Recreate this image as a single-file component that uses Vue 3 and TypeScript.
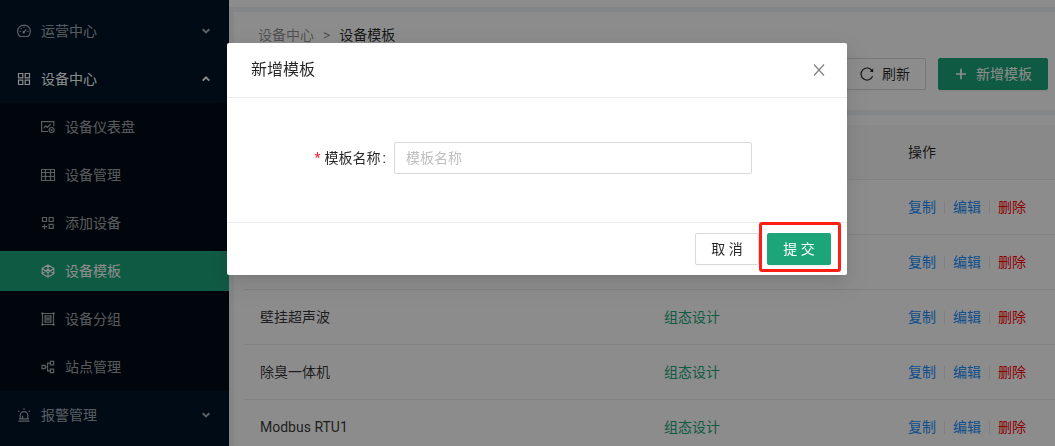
<script setup lang="ts">
import { ref } from 'vue'

interface SubItem {
  label: string
  icon: string
}

interface TemplateRow {
  id: number
  name: string
}

const subItems: SubItem[] = [
  { label: '设备仪表盘', icon: 'fund' },
  { label: '设备管理', icon: 'table' },
  { label: '添加设备', icon: 'add' },
  { label: '设备模板', icon: 'template' },
  { label: '设备分组', icon: 'group' },
  { label: '站点管理', icon: 'site' },
]

const rows: TemplateRow[] = [
  { id: 1, name: '' },
  { id: 2, name: '' },
  { id: 3, name: '壁挂超声波' },
  { id: 4, name: '除臭一体机' },
  { id: 5, name: 'Modbus RTU1' },
]

const active = ref('设备模板')
const templateName = ref('')
</script>

<template>
  <div class="shell">
    <nav class="sider">
      <button type="button" class="menu-item">
        <svg class="icon" viewBox="0 0 14 14">
          <path d="M3.1 12.5a6.4 6.4 0 1 1 7.8 0z" />
          <path d="M6.6 8.4l2.8-3M7 2.6v1.2M2.6 7.4h1.2M10.2 7.4h1.2M3.9 4.2l.8.8" />
          <circle cx="6.7" cy="8.2" r=".6" />
        </svg>
        <span>运营中心</span>
        <svg class="arrow" viewBox="0 0 8 6"><path d="M.7 1.2L4 4.4l3.3-3.2" /></svg>
      </button>
      <button type="button" class="menu-item open">
        <svg class="icon" viewBox="0 0 14 14">
          <path d="M1.5 1.5h4.3v4.3H1.5zM8.2 1.5h4.3v4.3H8.2zM1.5 8.2h4.3v4.3H1.5zM8.2 8.2h4.3v4.3H8.2z" />
        </svg>
        <span>设备中心</span>
        <svg class="arrow" viewBox="0 0 8 6"><path d="M.7 4.6L4 1.4l3.3 3.2" /></svg>
      </button>
      <div class="submenu">
        <a
          v-for="item in subItems"
          :key="item.label"
          href="#"
          class="sub-item"
          :class="{ selected: item.label === active }"
          @click.prevent="active = item.label"
        >
          <svg class="icon" viewBox="0 0 14 14">
            <template v-if="item.icon === 'fund'">
              <path d="M7 11.5H.6V1.6h12.2v4.6M2.6 8.3l2.2-2.4 1.6 1.5 3.4-3.6" />
              <circle cx="10.6" cy="10" r="2.5" />
              <circle cx="10.6" cy="10" r=".5" />
            </template>
            <path
              v-else-if="item.icon === 'table'"
              d="M.5 1.5h13v11H.5zM.5 4.5h13M.5 8.5h13M4.5 1.5v11M9.5 1.5v11"
            />
            <path
              v-else-if="item.icon === 'add'"
              d="M1.5 1.5h4v4h-4zM8.2 1.5h4v4h-4zM8.2 8.3h4v4h-4zM3.5 8.3v4.9M1 10.7h5"
            />
            <path
              v-else-if="item.icon === 'template'"
              d="M7 .9l5.8 3.4v5.4L7 13.1 1.2 9.7V4.3zM1.2 4.6L7 8.8l5.8-4.2M1.2 9.4L7 5.2l5.8 4.2M7 .9v4.3M7 8.8v4.3"
            />
            <template v-else-if="item.icon === 'group'">
              <path d="M1.5 1.5h11v11h-11zM4 3.8h6v2.4H4zM4 7.8h6v2.4H4z" />
              <path d="M.3 1.2h2M11.7 1.2h2M.3 12.8h2M11.7 12.8h2" />
            </template>
            <path
              v-else
              d="M1 5.4h3.2v3.2H1zM9.4 1.4h3.2v3.4H9.4zM9.4 9.2h3.2v3.4H9.4zM4.2 7h2.4M9.4 3.1H6.6v7.8h2.8"
            />
          </svg>
          <span>{{ item.label }}</span>
        </a>
      </div>
      <button type="button" class="menu-item">
        <svg class="icon" viewBox="0 0 14 14">
          <path d="M3.2 10.9V7.4a3.8 3.8 0 0 1 7.6 0v3.5M1.4 13.2h11.2M2 10.9h10M5.6 10.5V7.7M7 .3v1.5M1.2 2.7l1.1.9M12.8 2.7l-1.1.9" />
        </svg>
        <span>报警管理</span>
        <svg class="arrow" viewBox="0 0 8 6"><path d="M.7 1.2L4 4.4l3.3-3.2" /></svg>
      </button>
    </nav>

    <div class="main">
      <div class="topbar"></div>
      <header class="page-head">
        <div class="crumbs">
          <a href="#">设备中心</a>
          <span class="sep">&gt;</span>
          <span class="current">设备模板</span>
        </div>
        <div class="toolbar">
          <button type="button" class="btn">
            <svg class="icon" viewBox="0 0 14 14">
              <path d="M12.6 9.3A6 6 0 1 1 12 3.6" />
              <path class="solid" d="M13.2 1.6v3.7l-3.5-.7z" />
            </svg>
            <span>刷新</span>
          </button>
          <button type="button" class="btn primary">
            <svg class="icon thick" viewBox="0 0 14 14"><path d="M7 1.8v10.4M2 7h10" /></svg>
            <span>新增模板</span>
          </button>
        </div>
      </header>
      <section class="card">
        <table>
          <thead>
            <tr>
              <th class="col-name">模板名称</th>
              <th class="col-design"></th>
              <th>操作</th>
            </tr>
          </thead>
          <tbody>
            <tr v-for="row in rows" :key="row.id">
              <td>{{ row.name }}</td>
              <td><a href="#" class="design">组态设计</a></td>
              <td>
                <div class="actions">
                  <a href="#">复制</a>
                  <i class="divider"></i>
                  <a href="#">编辑</a>
                  <i class="divider"></i>
                  <a href="#" class="danger">删除</a>
                </div>
              </td>
            </tr>
          </tbody>
        </table>
      </section>
    </div>

    <div class="mask">
      <form class="modal" role="dialog" aria-labelledby="dialog-title" @submit.prevent>
        <header class="modal-head">
          <h2 id="dialog-title">新增模板</h2>
          <button type="button" class="close" aria-label="关闭">
            <svg viewBox="0 0 12 12"><path d="M1 .5l10 11M11 .5L1 11.5" /></svg>
          </button>
        </header>
        <div class="modal-body">
          <label for="template-name">模板名称</label>
          <input id="template-name" v-model="templateName" type="text" placeholder="模板名称" />
        </div>
        <footer class="modal-foot">
          <button type="button" class="btn action">取 消</button>
          <span class="highlight">
            <button type="submit" class="btn primary action">提 交</button>
          </span>
        </footer>
      </form>
    </div>
  </div>
</template>

<style>
body {
  margin: 0;
}
</style>

<style scoped>
* {
  box-sizing: border-box;
}

.shell {
  display: flex;
  height: 100vh;
  overflow: hidden;
  background: #f0f2f5;
  color: rgba(0, 0, 0, 0.65);
  font: 14px/22px Roboto, 'Noto Sans CJK SC', sans-serif;
}

button,
input {
  font: inherit;
}

a {
  text-decoration: none;
  color: #1890ff;
}

.icon {
  flex: none;
  width: 14px;
  height: 14px;
  fill: none;
  stroke: currentColor;
  stroke-width: 1.2;
}

.icon.thick {
  stroke-width: 1.7;
}

.solid {
  fill: currentColor;
  stroke: none;
}

.sider {
  flex: none;
  width: 229px;
  padding-top: 7px;
  background: #001529;
}

.menu-item {
  display: flex;
  align-items: center;
  gap: 10px;
  width: 100%;
  height: 48px;
  padding: 0 19px 0 17px;
  border: 0;
  background: none;
  color: rgba(255, 255, 255, 0.65);
}

.menu-item.open,
.sub-item.selected {
  color: #fff;
}

.arrow {
  width: 8px;
  height: 6px;
  margin-left: auto;
  fill: none;
  stroke: currentColor;
  stroke-width: 2;
}

.submenu {
  display: flex;
  flex-direction: column;
  gap: 8px;
  padding: 4px 0;
  background: #000c17;
}

.sub-item {
  display: flex;
  align-items: center;
  gap: 10px;
  height: 40px;
  padding-left: 41px;
  color: rgba(255, 255, 255, 0.65);
}

.sub-item.selected {
  background: #1da57a;
}

.main {
  display: flex;
  flex: 1;
  flex-direction: column;
  gap: 5px;
  min-width: 0;
}

.topbar {
  flex: none;
  height: 7px;
  background: #fff;
}

.page-head {
  flex: none;
  margin-left: 5px;
  padding: 12px 7px 20px 24px;
  background: #fff;
}

.crumbs {
  display: flex;
  gap: 9px;
}

.crumbs a,
.sep {
  color: rgba(0, 0, 0, 0.45);
}

.current {
  color: rgba(0, 0, 0, 0.85);
}

.toolbar {
  display: flex;
  justify-content: flex-end;
  gap: 12px;
  margin-top: 12px;
}

.btn {
  display: flex;
  align-items: center;
  justify-content: center;
  gap: 8px;
  height: 32px;
  padding: 0 15px;
  border: 1px solid #d9d9d9;
  border-radius: 2px;
  background: #fff;
  color: rgba(0, 0, 0, 0.85);
  white-space: nowrap;
  box-shadow: 0 2px 0 rgba(0, 0, 0, 0.016);
}

.btn.primary {
  border-color: #1da57a;
  background: #1da57a;
  color: #fff;
  box-shadow: 0 2px 0 rgba(0, 0, 0, 0.04);
}

.btn.action {
  width: 64px;
  padding: 0;
}

.card {
  flex: 1;
  min-height: 0;
  margin-left: 5px;
  padding: 10px 0 0 10px;
  background: #fff;
}

table {
  width: 100%;
  table-layout: fixed;
  border-collapse: separate;
  border-spacing: 0;
}

th,
td {
  height: 55px;
  padding: 16px;
  border-bottom: 1px solid #ebebeb;
  text-align: left;
  font-weight: 400;
}

th {
  background: #fafafa;
  color: rgba(0, 0, 0, 0.85);
}

td {
  color: rgba(0, 0, 0, 0.8);
}

.col-name {
  width: 404px;
}

.col-design {
  width: 244px;
}

.design {
  color: #1da57a;
}

.actions {
  display: flex;
  align-items: center;
  gap: 8px;
}

.divider {
  width: 1px;
  height: 13px;
  background: #ebebeb;
}

.danger {
  color: #f00;
}

.mask {
  position: fixed;
  inset: 0;
  display: flex;
  align-items: flex-start;
  justify-content: center;
  padding: 43px 0 0 19px;
  background: rgba(0, 0, 0, 0.45);
}

.modal {
  width: 620px;
  max-width: 100%;
  border-radius: 2px;
  background: #fff;
  box-shadow:
    0 3px 6px -4px rgba(0, 0, 0, 0.12),
    0 6px 16px 0 rgba(0, 0, 0, 0.08),
    0 9px 28px 8px rgba(0, 0, 0, 0.05);
}

.modal-head {
  display: flex;
  align-items: center;
  justify-content: space-between;
  padding: 16px 22px 16px 24px;
  border-bottom: 1px solid #ebebeb;
}

h2 {
  margin: 0;
  color: rgba(0, 0, 0, 0.85);
  font-size: 16px;
  font-weight: 400;
  line-height: 22px;
}

.close {
  display: flex;
  padding: 0;
  border: 0;
  background: none;
  color: rgba(0, 0, 0, 0.5);
}

.close svg {
  width: 12px;
  height: 12px;
  fill: none;
  stroke: currentColor;
  stroke-width: 1.2;
}

.modal-body {
  display: grid;
  grid-template-columns: 25% 62.5%;
  align-items: center;
  padding: 44px 24px 48px;
}

label {
  color: rgba(0, 0, 0, 0.85);
  text-align: right;
}

label::before {
  content: '*';
  margin-right: 4px;
  color: #f5222d;
}

label::after {
  content: ':';
  margin: 0 8px 0 2px;
}

input {
  width: 100%;
  height: 32px;
  padding: 4px 11px;
  border: 1px solid #d9d9d9;
  border-radius: 2px;
  outline: 0;
  background: #fff;
  color: rgba(0, 0, 0, 0.65);
}

input::placeholder {
  color: #bfbfbf;
}

.modal-foot {
  display: flex;
  justify-content: flex-end;
  gap: 8px;
  padding: 10px 16px;
  border-top: 1px solid #ebebeb;
}

.highlight {
  position: relative;
}

.highlight::after {
  content: '';
  position: absolute;
  inset: -11px -10px -7px -8px;
  border: 3px solid #ff1e14;
  border-radius: 3px;
  pointer-events: none;
}
</style>
